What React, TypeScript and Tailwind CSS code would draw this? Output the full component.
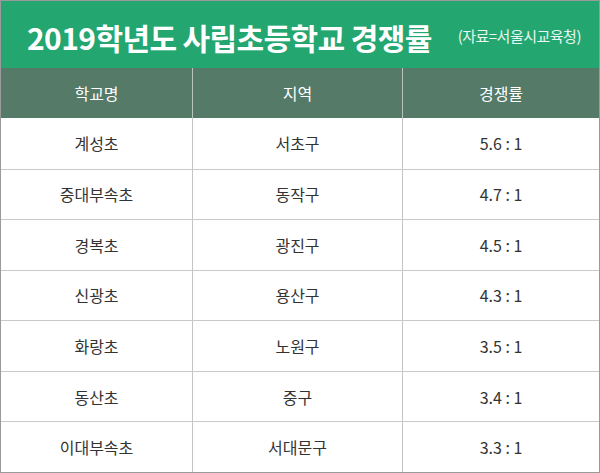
import React from "react";

const rows = [
	["계성초", "서초구", "5.6 : 1"],
	["중대부속초", "동작구", "4.7 : 1"],
	["경복초", "광진구", "4.5 : 1"],
	["신광초", "용산구", "4.3 : 1"],
	["화랑초", "노원구", "3.5 : 1"],
	["동산초", "중구", "3.4 : 1"],
	["이대부속초", "서대문구", "3.3 : 1"],
];

const App = () => {
	return (
		<div
			className="w-[600px] h-[473px] flex flex-col border border-[#9a9a9a] bg-white overflow-hidden"
			style={{ fontFamily: '"Noto Sans CJK KR", "Noto Sans", sans-serif' }}
		>
			<div className="h-[67px] bg-[#23a66f] flex items-center pl-[26px] pr-4 pt-[4px]">
				<h1 className="text-[30px] font-bold text-white tracking-[-0.6px] leading-none">
					2019학년도 사립초등학교 경쟁률
				</h1>
				<span className="ml-auto mr-[2px] text-[15px] text-white/90 tracking-[-0.5px]">
					(자료=서울시교육청)
				</span>
			</div>
			<div className="h-[50px] bg-[#557a68] grid grid-cols-[192px_210px_1fr] text-white text-[16px]">
				<div className="flex items-center justify-center border-r border-[#b8c4be]">학교명</div>
				<div className="flex items-center justify-center border-r border-[#b8c4be]">지역</div>
				<div className="flex items-center justify-center">경쟁률</div>
			</div>
			<div className="flex-1 grid grid-rows-7 text-[16px] text-[#333]">
				{rows.map((r, i) => (
					<div
						key={i}
						className={`grid grid-cols-[192px_210px_1fr] ${i > 0 ? "border-t border-[#c9c9c9]" : ""}`}
					>
						<div className="flex items-center justify-center border-r border-[#c4c4c4]">{r[0]}</div>
						<div className="flex items-center justify-center border-r border-[#c4c4c4]">{r[1]}</div>
						<div className="flex items-center justify-center">{r[2]}</div>
					</div>
				))}
			</div>
		</div>
	);
};

export default App;
